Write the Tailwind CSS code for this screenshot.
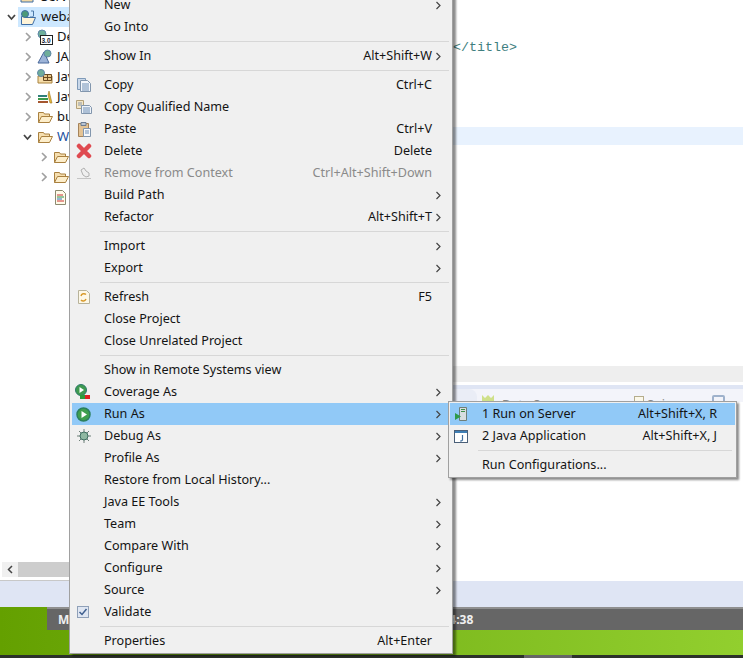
<!DOCTYPE html>
<html lang="en">
<head>
    <meta charset="UTF-8">
    <meta name="viewport" content="width=device-width, initial-scale=1.0">
    <title>Eclipse Run As menu</title>
    <script src="https://cdn.jsdelivr.net/npm/@tailwindcss/browser@4"></script>
</head>
<body class="relative w-[743px] h-[658px] overflow-hidden bg-white font-['Noto_Sans',sans-serif] text-[12.6px] text-[#141414]">
    <!-- workbench behind the menu -->
    <div class="flex h-[581px]">
        <div class="w-[453px] flex flex-col">
            <div class="flex-1 w-[69px] overflow-hidden -mt-[13px] text-[13px]">
                <div class="flex items-center h-5 pl-[20px]"><svg class="shrink-0" width="16" height="16" viewBox="0 0 16 16"><path d="M1 13V5h5l1 1h6v7z" fill="#f2d9a6" stroke="#3f6ea5"/></svg><span class="ml-[5px] whitespace-nowrap">Servers</span></div>
                <div class="flex items-center h-5 pl-[7px]">
                    <svg class="shrink-0" width="9" height="7" viewBox="0 0 9 7"><path d="M1 1l3.500 4L8 1" fill="none" stroke="#444" stroke-width="1.800"/></svg>
                    <div class="flex items-center flex-1 min-w-0 overflow-hidden h-5 ml-[2px] pl-[2px] bg-[#cde8ff]">
                        <svg class="shrink-0" width="17" height="17" viewBox="0 0 17 17"><path d="M1.500 15.500v-8h3l1 1h10l-3 7z" fill="#fff4d8" stroke="#3f6ea5"/><circle cx="5" cy="5" r="3.500" fill="#4d9a78" stroke="#3f6ea5"/><path d="M11 2h2.500v5l-1 1H10" fill="none" stroke="#4a78a8"/></svg>
                        <span class="ml-[4px] whitespace-nowrap">webapp</span>
                    </div>
                </div>
                <div class="flex items-center h-5 pl-[25px]">
                    <svg class="mr-[6px] shrink-0" width="6" height="10" viewBox="0 0 6 10"><path d="M1 1l4 4-4 4" fill="none" stroke="#a0a0a0" stroke-width="1.600"/></svg>
                    <svg class="shrink-0" width="16" height="16" viewBox="0 0 16 16"><circle cx="5" cy="5" r="4" fill="#6fae9a" stroke="#5f86a8"/><rect x="3.500" y="6.500" width="12" height="9" fill="#fff" stroke="#222"/><text x="4.500" y="14" font-size="6.500" font-weight="700" font-family="Liberation Sans" fill="#123">3.0</text></svg>
                    <span class="ml-[4px] whitespace-nowrap">Deployment</span>
                </div>
                <div class="flex items-center h-5 pl-[25px]">
                    <svg class="mr-[6px] shrink-0" width="6" height="10" viewBox="0 0 6 10"><path d="M1 1l4 4-4 4" fill="none" stroke="#a0a0a0" stroke-width="1.600"/></svg>
                    <svg class="shrink-0" width="16" height="16" viewBox="0 0 16 16"><path d="M7 3L1 14h11z" fill="#9db4d8" stroke="#48689a"/><circle cx="10.500" cy="4.500" r="3.500" fill="#6fae9a" stroke="#5f86a8"/></svg>
                    <span class="ml-[4px] whitespace-nowrap">JAX-WS</span>
                </div>
                <div class="flex items-center h-5 pl-[25px]">
                    <svg class="mr-[6px] shrink-0" width="6" height="10" viewBox="0 0 6 10"><path d="M1 1l4 4-4 4" fill="none" stroke="#a0a0a0" stroke-width="1.600"/></svg>
                    <svg class="shrink-0" width="16" height="16" viewBox="0 0 16 16"><path d="M1 14V7h14v7z" fill="#f5dca8" stroke="#a9833f"/><path d="M6.500 5.500h8v6h-8zM10.500 5.500v6M6.500 8.500h8" fill="#e8c98a" stroke="#6b4a20"/><circle cx="4" cy="4" r="3.500" fill="#6fae9a" stroke="#5f86a8"/></svg>
                    <span class="ml-[4px] whitespace-nowrap">Java</span>
                </div>
                <div class="flex items-center h-5 pl-[25px]">
                    <svg class="mr-[6px] shrink-0" width="6" height="10" viewBox="0 0 6 10"><path d="M1 1l4 4-4 4" fill="none" stroke="#a0a0a0" stroke-width="1.600"/></svg>
                    <svg class="shrink-0" width="16" height="16" viewBox="0 0 16 16"><path d="M1 6h9v2H1z" fill="#2f7f7a"/><path d="M1 9h10v2H1z" fill="#3e9a4a"/><path d="M1 12h10v2H1z" fill="#a5562f"/><path d="M12 2l3 12h-2l-2-8z" fill="#e9b93a" stroke="#9a7420" stroke-width=".6"/></svg>
                    <span class="ml-[4px] whitespace-nowrap">Java</span>
                </div>
                <div class="flex items-center h-5 pl-[25px]">
                    <svg class="mr-[6px] shrink-0" width="6" height="10" viewBox="0 0 6 10"><path d="M1 1l4 4-4 4" fill="none" stroke="#a0a0a0" stroke-width="1.600"/></svg>
                    <svg class="shrink-0" width="16" height="16" viewBox="0 0 16 16"><path d="M1.500 13.500v-10h5l1 1.500h5v2" fill="#f6dfb0" stroke="#a9803f"/><path d="M1.500 13.500l3-6h11l-3 6z" fill="#fdeecb" stroke="#a9803f"/></svg>
                    <span class="ml-[4px] whitespace-nowrap">build</span>
                </div>
                <div class="flex items-center h-5 pl-[23px]">
                    <svg class="mr-[5px] shrink-0" width="9" height="7" viewBox="0 0 9 7"><path d="M1 1l3.500 4L8 1" fill="none" stroke="#444" stroke-width="1.800"/></svg>
                    <svg class="shrink-0" width="16" height="16" viewBox="0 0 16 16"><path d="M1.500 13.500v-10h5l1 1.500h5v2" fill="#f6dfb0" stroke="#a9803f"/><path d="M1.500 13.500l3-6h11l-3 6z" fill="#fdeecb" stroke="#a9803f"/></svg>
                    <span class="ml-[4px] whitespace-nowrap text-[#1c4fa0]">WebContent</span>
                </div>
                <div class="flex items-center h-5 pl-[41px]">
                    <svg class="mr-[6px] shrink-0" width="6" height="10" viewBox="0 0 6 10"><path d="M1 1l4 4-4 4" fill="none" stroke="#a0a0a0" stroke-width="1.600"/></svg>
                    <svg class="shrink-0" width="16" height="16" viewBox="0 0 16 16"><path d="M1.500 13.500v-10h5l1 1.500h5v2" fill="#f6dfb0" stroke="#a9803f"/><path d="M1.500 13.500l3-6h11l-3 6z" fill="#fdeecb" stroke="#a9803f"/></svg>
                </div>
                <div class="flex items-center h-5 pl-[41px]">
                    <svg class="mr-[6px] shrink-0" width="6" height="10" viewBox="0 0 6 10"><path d="M1 1l4 4-4 4" fill="none" stroke="#a0a0a0" stroke-width="1.600"/></svg>
                    <svg class="shrink-0" width="16" height="16" viewBox="0 0 16 16"><path d="M1.500 13.500v-10h5l1 1.500h5v2" fill="#f6dfb0" stroke="#a9803f"/><path d="M1.500 13.500l3-6h11l-3 6z" fill="#fdeecb" stroke="#a9803f"/></svg>
                </div>
                <div class="flex items-center h-5 pl-[55px]">
                    <svg width="11" height="15" viewBox="0 0 11 15"><path d="M.5.500h7l3 3v11H.5z" fill="#fffbe9" stroke="#8c8a70"/><path d="M2 5h6" stroke="#c33"/><path d="M2 7h7" stroke="#2c8f4a"/><path d="M2 9h5" stroke="#2f6fc0"/><path d="M2 11h7" stroke="#c33"/></svg>
                </div>
            </div>
            <div class="flex h-[15px] ml-[2px] mb-[3px]">
                <div class="w-4 bg-[#f0f0f0] flex items-center justify-center">
                    <svg width="6" height="9" viewBox="0 0 6 9"><path d="M5 1L1.500 4.500 5 8" fill="none" stroke="#444" stroke-width="1.500"/></svg>
                </div>
                <div class="flex-1 bg-[#cdcdcd]"></div>
            </div>
            <div class="h-px bg-[#c8c8c8]"></div>
        </div>
        <div class="flex-1 flex flex-col">
            <div class="h-[366px]">
                <div class="pt-[39px] font-['Liberation_Mono',monospace] text-[13.33px] leading-[18px] text-[#3f7f7f]">&lt;/title&gt;</div>
                <div class="mt-[70px] h-[18px] bg-[#e8f2fe]"></div>
            </div>
            <div class="h-4 bg-[#eeeeee]"></div>
            <div class="h-[3px] bg-white"></div>
            <div class="h-1 bg-[#dfe5f4]"></div>
            <!-- view tabs, mostly hidden by the submenu -->
            <div class="flex h-[13px] overflow-hidden bg-[#f3f4fa] text-[#888888]">
                <div class="w-6 rounded-tr-lg bg-[#eaedf6]"></div>
                <svg class="ml-[5px] mt-[6px]" width="13" height="7" viewBox="0 0 13 7"><path d="M0 0l3 3 3-3 3 3 3-3v7H0z" fill="#cfe08a"/></svg>
                <span class="ml-[7px] mt-[8px] w-[132px] whitespace-nowrap leading-4">Data Source</span>
                <div class="mt-[7px] w-[10px] h-[10px] border border-[#b5ad8c] bg-[#fbf8ea]"></div>
                <span class="ml-[3px] mt-[8px] w-[65px] leading-4">Snip</span>
                <div class="mt-[6px] w-[13px] h-[10px] border-2 border-[#9fb2cc] rounded-[2px]"></div>
            </div>
            <div class="flex-1 bg-white"></div>
        </div>
    </div>
    <div class="h-[26px] bg-[#dfe5f4]"></div>
    <div class="h-[48px] bg-linear-to-r from-[#64a000] to-[#92cf2e]">
        <div class="ml-[47px] h-[23px] bg-[#666666] border-t-2 border-[#8f8f8f] flex items-center font-bold text-[12px] text-[#f0f0f0]">
            <span class="ml-[11px]">M</span>
            <span class="ml-[380px]">4:38</span>
        </div>
    </div>
    <div class="flex h-[3px] bg-[#2c312a]">
        <div class="ml-[524px] w-12 bg-[#666666]"></div>
    </div>

    <!-- context menu -->
    <div class="absolute left-[69px] -top-[9px] w-[384px] bg-[#f0f0f0] border border-[#a0a0a0] pl-[2px] pt-[2px] pb-[1px] shadow-[3px_2px_2px_rgba(0,0,0,0.45)]">
        <div class="flex items-center h-[22px]"><span class="w-8"></span><span class="flex-1">New</span><svg class="mr-[10px]" width="7" height="9" viewBox="0 0 7 9"><path d="M1.500 1L5 4.500 1.500 8" fill="none" stroke="#444" stroke-width="1.200"/></svg></div>
        <div class="flex items-center h-[22px]"><span class="w-8"></span><span class="flex-1">Go Into</span></div>
        <div class="h-[7px] flex items-center pl-[28px] pr-[3px]"><div class="h-px w-full bg-[#d7d7d7]"></div></div>
        <div class="flex items-center h-[22px]"><span class="w-8"></span><span class="flex-1">Show In</span><span class="mr-[3px]">Alt+Shift+W</span><svg class="mr-[10px]" width="7" height="9" viewBox="0 0 7 9"><path d="M1.500 1L5 4.500 1.500 8" fill="none" stroke="#444" stroke-width="1.200"/></svg></div>
        <div class="h-[7px] flex items-center pl-[28px] pr-[3px]"><div class="h-px w-full bg-[#d7d7d7]"></div></div>
        <div class="flex items-center h-[22px]">
            <span class="w-8 pl-[4px]"><svg width="16" height="16" viewBox="0 0 16 16"><path d="M1.500 1.500h8v11h-8z" fill="#c9d8ea" stroke="#7f9ab8"/><path d="M4.500 3.500h7l3 3v8h-10z" fill="#f4f7fb" stroke="#8296ad"/><path d="M6 7h7M6 9h7M6 11h7M6 13h7" stroke="#6f8fb5"/></svg></span>
            <span class="flex-1">Copy</span><span class="mr-[20px]">Ctrl+C</span>
        </div>
        <div class="flex items-center h-[22px]">
            <span class="w-8 pl-[4px]"><svg width="16" height="16" viewBox="0 0 16 16"><path d="M.5 1.500h7v8h-7z" fill="#f3e6c6" stroke="#b3a078"/><path d="M2 4h4M2 6h4" stroke="#8a97a8"/><path d="M5.500 6.500h8l2 2v6h-10z" fill="#eef3f9" stroke="#8296ad"/><path d="M7 9h7M7 11h7M7 13h7" stroke="#6f8fb5"/></svg></span>
            <span class="flex-1">Copy Qualified Name</span>
        </div>
        <div class="flex items-center h-[22px]">
            <span class="w-8 pl-[4px]"><svg width="16" height="16" viewBox="0 0 16 16"><path d="M2.500 2.500h10v13h-10z" fill="#e4c394" stroke="#a5835a"/><path d="M5 1.500h5v3H5z" fill="#b9c4d2" stroke="#6d7d92"/><path d="M7.500 7.500h7v8h-7z" fill="#f7f9fc" stroke="#8296ad"/><path d="M9 10h4M9 12h4" stroke="#6f8fb5"/></svg></span>
            <span class="flex-1">Paste</span><span class="mr-[20px]">Ctrl+V</span>
        </div>
        <div class="flex items-center h-[22px]">
            <span class="w-8 pl-[4px]"><svg width="16" height="16" viewBox="0 0 16 16"><path d="M3 3l10 10M13 3L3 13" fill="none" stroke="#df4a50" stroke-width="4.500" stroke-linecap="round"/></svg></span>
            <span class="flex-1">Delete</span><span class="mr-[20px]">Delete</span>
        </div>
        <div class="flex items-center h-[22px] text-[#8a8a8a]">
            <span class="w-8 pl-[4px]"><svg width="16" height="16" viewBox="0 0 16 16"><path d="M1 13.500h14" stroke="#c4c4c4"/><path d="M5 5l3-2 2 3 3 2v3l-3 1-3-2z" fill="#efefef" stroke="#b0b0b0"/></svg></span>
            <span class="flex-1">Remove from Context</span><span class="mr-[20px]">Ctrl+Alt+Shift+Down</span>
        </div>
        <div class="flex items-center h-[22px]"><span class="w-8"></span><span class="flex-1">Build Path</span><svg class="mr-[10px]" width="7" height="9" viewBox="0 0 7 9"><path d="M1.500 1L5 4.500 1.500 8" fill="none" stroke="#444" stroke-width="1.200"/></svg></div>
        <div class="flex items-center h-[22px]"><span class="w-8"></span><span class="flex-1">Refactor</span><span class="mr-[3px]">Alt+Shift+T</span><svg class="mr-[10px]" width="7" height="9" viewBox="0 0 7 9"><path d="M1.500 1L5 4.500 1.500 8" fill="none" stroke="#444" stroke-width="1.200"/></svg></div>
        <div class="h-[7px] flex items-center pl-[28px] pr-[3px]"><div class="h-px w-full bg-[#d7d7d7]"></div></div>
        <div class="flex items-center h-[22px]"><span class="w-8"></span><span class="flex-1">Import</span><svg class="mr-[10px]" width="7" height="9" viewBox="0 0 7 9"><path d="M1.500 1L5 4.500 1.500 8" fill="none" stroke="#444" stroke-width="1.200"/></svg></div>
        <div class="flex items-center h-[22px]"><span class="w-8"></span><span class="flex-1">Export</span><svg class="mr-[10px]" width="7" height="9" viewBox="0 0 7 9"><path d="M1.500 1L5 4.500 1.500 8" fill="none" stroke="#444" stroke-width="1.200"/></svg></div>
        <div class="h-[7px] flex items-center pl-[28px] pr-[3px]"><div class="h-px w-full bg-[#d7d7d7]"></div></div>
        <div class="flex items-center h-[22px]">
            <span class="w-8 pl-[4px]"><svg width="16" height="16" viewBox="0 0 16 16"><path d="M2.500 1.500h8l3 3v10h-11z" fill="#fdf8e8" stroke="#b8b39a"/><path d="M5 7a3 3 0 0 1 5-1.500M10 10a3 3 0 0 1-5 1" fill="none" stroke="#d99a2b" stroke-width="1.500"/></svg></span>
            <span class="flex-1">Refresh</span><span class="mr-[20px]">F5</span>
        </div>
        <div class="flex items-center h-[22px]"><span class="w-8"></span><span class="flex-1">Close Project</span></div>
        <div class="flex items-center h-[22px]"><span class="w-8"></span><span class="flex-1">Close Unrelated Project</span></div>
        <div class="h-[7px] flex items-center pl-[28px] pr-[3px]"><div class="h-px w-full bg-[#d7d7d7]"></div></div>
        <div class="flex items-center h-[22px]"><span class="w-8"></span><span class="flex-1">Show in Remote Systems view</span></div>
        <div class="flex items-center h-[22px]">
            <span class="w-8 pl-[3px]"><svg width="16" height="16" viewBox="0 0 16 16"><circle cx="6" cy="6" r="5.500" fill="#3f9a50" stroke="#2d7a6a"/><path d="M4.500 3l4.500 3-4.500 3z" fill="#fff"/><path d="M5 11h5v4H5z" fill="#2f9a3a"/><path d="M10 11h5v4h-5z" fill="#d22"/></svg></span>
            <span class="flex-1">Coverage As</span><svg class="mr-[10px]" width="7" height="9" viewBox="0 0 7 9"><path d="M1.500 1L5 4.500 1.500 8" fill="none" stroke="#444" stroke-width="1.200"/></svg>
        </div>
        <div class="flex items-center h-[22px] bg-[#91c9f7]">
            <span class="w-8 pl-[4px]"><svg width="15" height="15" viewBox="0 0 15 15"><circle cx="7.500" cy="7.500" r="6.500" fill="#3f9f4d" stroke="#2b7f5c" stroke-width="1.500"/><path d="M5.500 4l5.500 3.500L5.500 11z" fill="#fff"/></svg></span>
            <span class="flex-1">Run As</span><svg class="mr-[10px]" width="7" height="9" viewBox="0 0 7 9"><path d="M1.500 1L5 4.500 1.500 8" fill="none" stroke="#444" stroke-width="1.200"/></svg>
        </div>
        <div class="flex items-center h-[22px]">
            <span class="w-8 pl-[4px]"><svg width="16" height="16" viewBox="0 0 16 16"><path d="M8 1v14M1 8h14M3 3l10 10M13 3L3 13" stroke="#6d7f78"/><circle cx="8" cy="8" r="4" fill="#8fb8a2" stroke="#3f6f62"/></svg></span>
            <span class="flex-1">Debug As</span><svg class="mr-[10px]" width="7" height="9" viewBox="0 0 7 9"><path d="M1.500 1L5 4.500 1.500 8" fill="none" stroke="#444" stroke-width="1.200"/></svg>
        </div>
        <div class="flex items-center h-[22px]"><span class="w-8"></span><span class="flex-1">Profile As</span><svg class="mr-[10px]" width="7" height="9" viewBox="0 0 7 9"><path d="M1.500 1L5 4.500 1.500 8" fill="none" stroke="#444" stroke-width="1.200"/></svg></div>
        <div class="flex items-center h-[22px]"><span class="w-8"></span><span class="flex-1">Restore from Local History...</span></div>
        <div class="flex items-center h-[22px]"><span class="w-8"></span><span class="flex-1">Java EE Tools</span><svg class="mr-[10px]" width="7" height="9" viewBox="0 0 7 9"><path d="M1.500 1L5 4.500 1.500 8" fill="none" stroke="#444" stroke-width="1.200"/></svg></div>
        <div class="flex items-center h-[22px]"><span class="w-8"></span><span class="flex-1">Team</span><svg class="mr-[10px]" width="7" height="9" viewBox="0 0 7 9"><path d="M1.500 1L5 4.500 1.500 8" fill="none" stroke="#444" stroke-width="1.200"/></svg></div>
        <div class="flex items-center h-[22px]"><span class="w-8"></span><span class="flex-1">Compare With</span><svg class="mr-[10px]" width="7" height="9" viewBox="0 0 7 9"><path d="M1.500 1L5 4.500 1.500 8" fill="none" stroke="#444" stroke-width="1.200"/></svg></div>
        <div class="flex items-center h-[22px]"><span class="w-8"></span><span class="flex-1">Configure</span><svg class="mr-[10px]" width="7" height="9" viewBox="0 0 7 9"><path d="M1.500 1L5 4.500 1.500 8" fill="none" stroke="#444" stroke-width="1.200"/></svg></div>
        <div class="flex items-center h-[22px]"><span class="w-8"></span><span class="flex-1">Source</span><svg class="mr-[10px]" width="7" height="9" viewBox="0 0 7 9"><path d="M1.500 1L5 4.500 1.500 8" fill="none" stroke="#444" stroke-width="1.200"/></svg></div>
        <div class="flex items-center h-[22px]">
            <span class="w-8 pl-[5px]"><svg width="12" height="12" viewBox="0 0 12 12"><rect x=".5" y=".5" width="11" height="11" fill="#dfe6f2" stroke="#8fa0b8"/><path d="M2.500 6l2.500 2.500L9.500 3" fill="none" stroke="#3f5f8f" stroke-width="1.500"/></svg></span>
            <span class="flex-1">Validate</span>
        </div>
        <div class="h-[7px] flex items-center pl-[28px] pr-[3px]"><div class="h-px w-full bg-[#d7d7d7]"></div></div>
        <div class="flex items-center h-[22px]"><span class="w-8"></span><span class="flex-1">Properties</span><span class="mr-[20px]">Alt+Enter</span></div>
    </div>

    <!-- Run As submenu -->
    <div class="absolute left-[448px] top-[401px] w-[289px] bg-[#f0f0f0] border border-[#a0a0a0] p-[1px] shadow-[2px_2px_2px_rgba(0,0,0,0.45)]">
        <div class="flex items-center h-[22px] bg-[#91c9f7]">
            <span class="w-8 pl-[4px]"><svg width="16" height="16" viewBox="0 0 16 16"><path d="M5.500 1.500h7v13h-7z" fill="#d8dde0" stroke="#6f7f78"/><path d="M7 3.500h4M7 5.500h4" stroke="#3f8f4a"/><path d="M1 7v7l6-3.500z" fill="#2f9a4a"/></svg></span>
            <span class="flex-1">1 Run on Server</span><span class="mr-[18px]">Alt+Shift+X, R</span>
        </div>
        <div class="flex items-center h-[22px]">
            <span class="w-8 pl-[4px]"><svg width="15" height="15" viewBox="0 0 15 15"><rect x=".5" y="1.500" width="13" height="12" fill="#fff" stroke="#4a5f78"/><path d="M1 2h12v2H1z" fill="#3f7fb5"/><path d="M8.500 6v5l-1 1H6" fill="none" stroke="#3f6f9f" stroke-width="1.200"/></svg></span>
            <span class="flex-1">2 Java Application</span><span class="mr-[18px]">Alt+Shift+X, J</span>
        </div>
        <div class="h-[7px] flex items-center pl-[28px] pr-[3px]"><div class="h-px w-full bg-[#d7d7d7]"></div></div>
        <div class="flex items-center h-[22px]"><span class="w-8"></span><span class="flex-1">Run Configurations...</span></div>
    </div>
</body>
</html>
